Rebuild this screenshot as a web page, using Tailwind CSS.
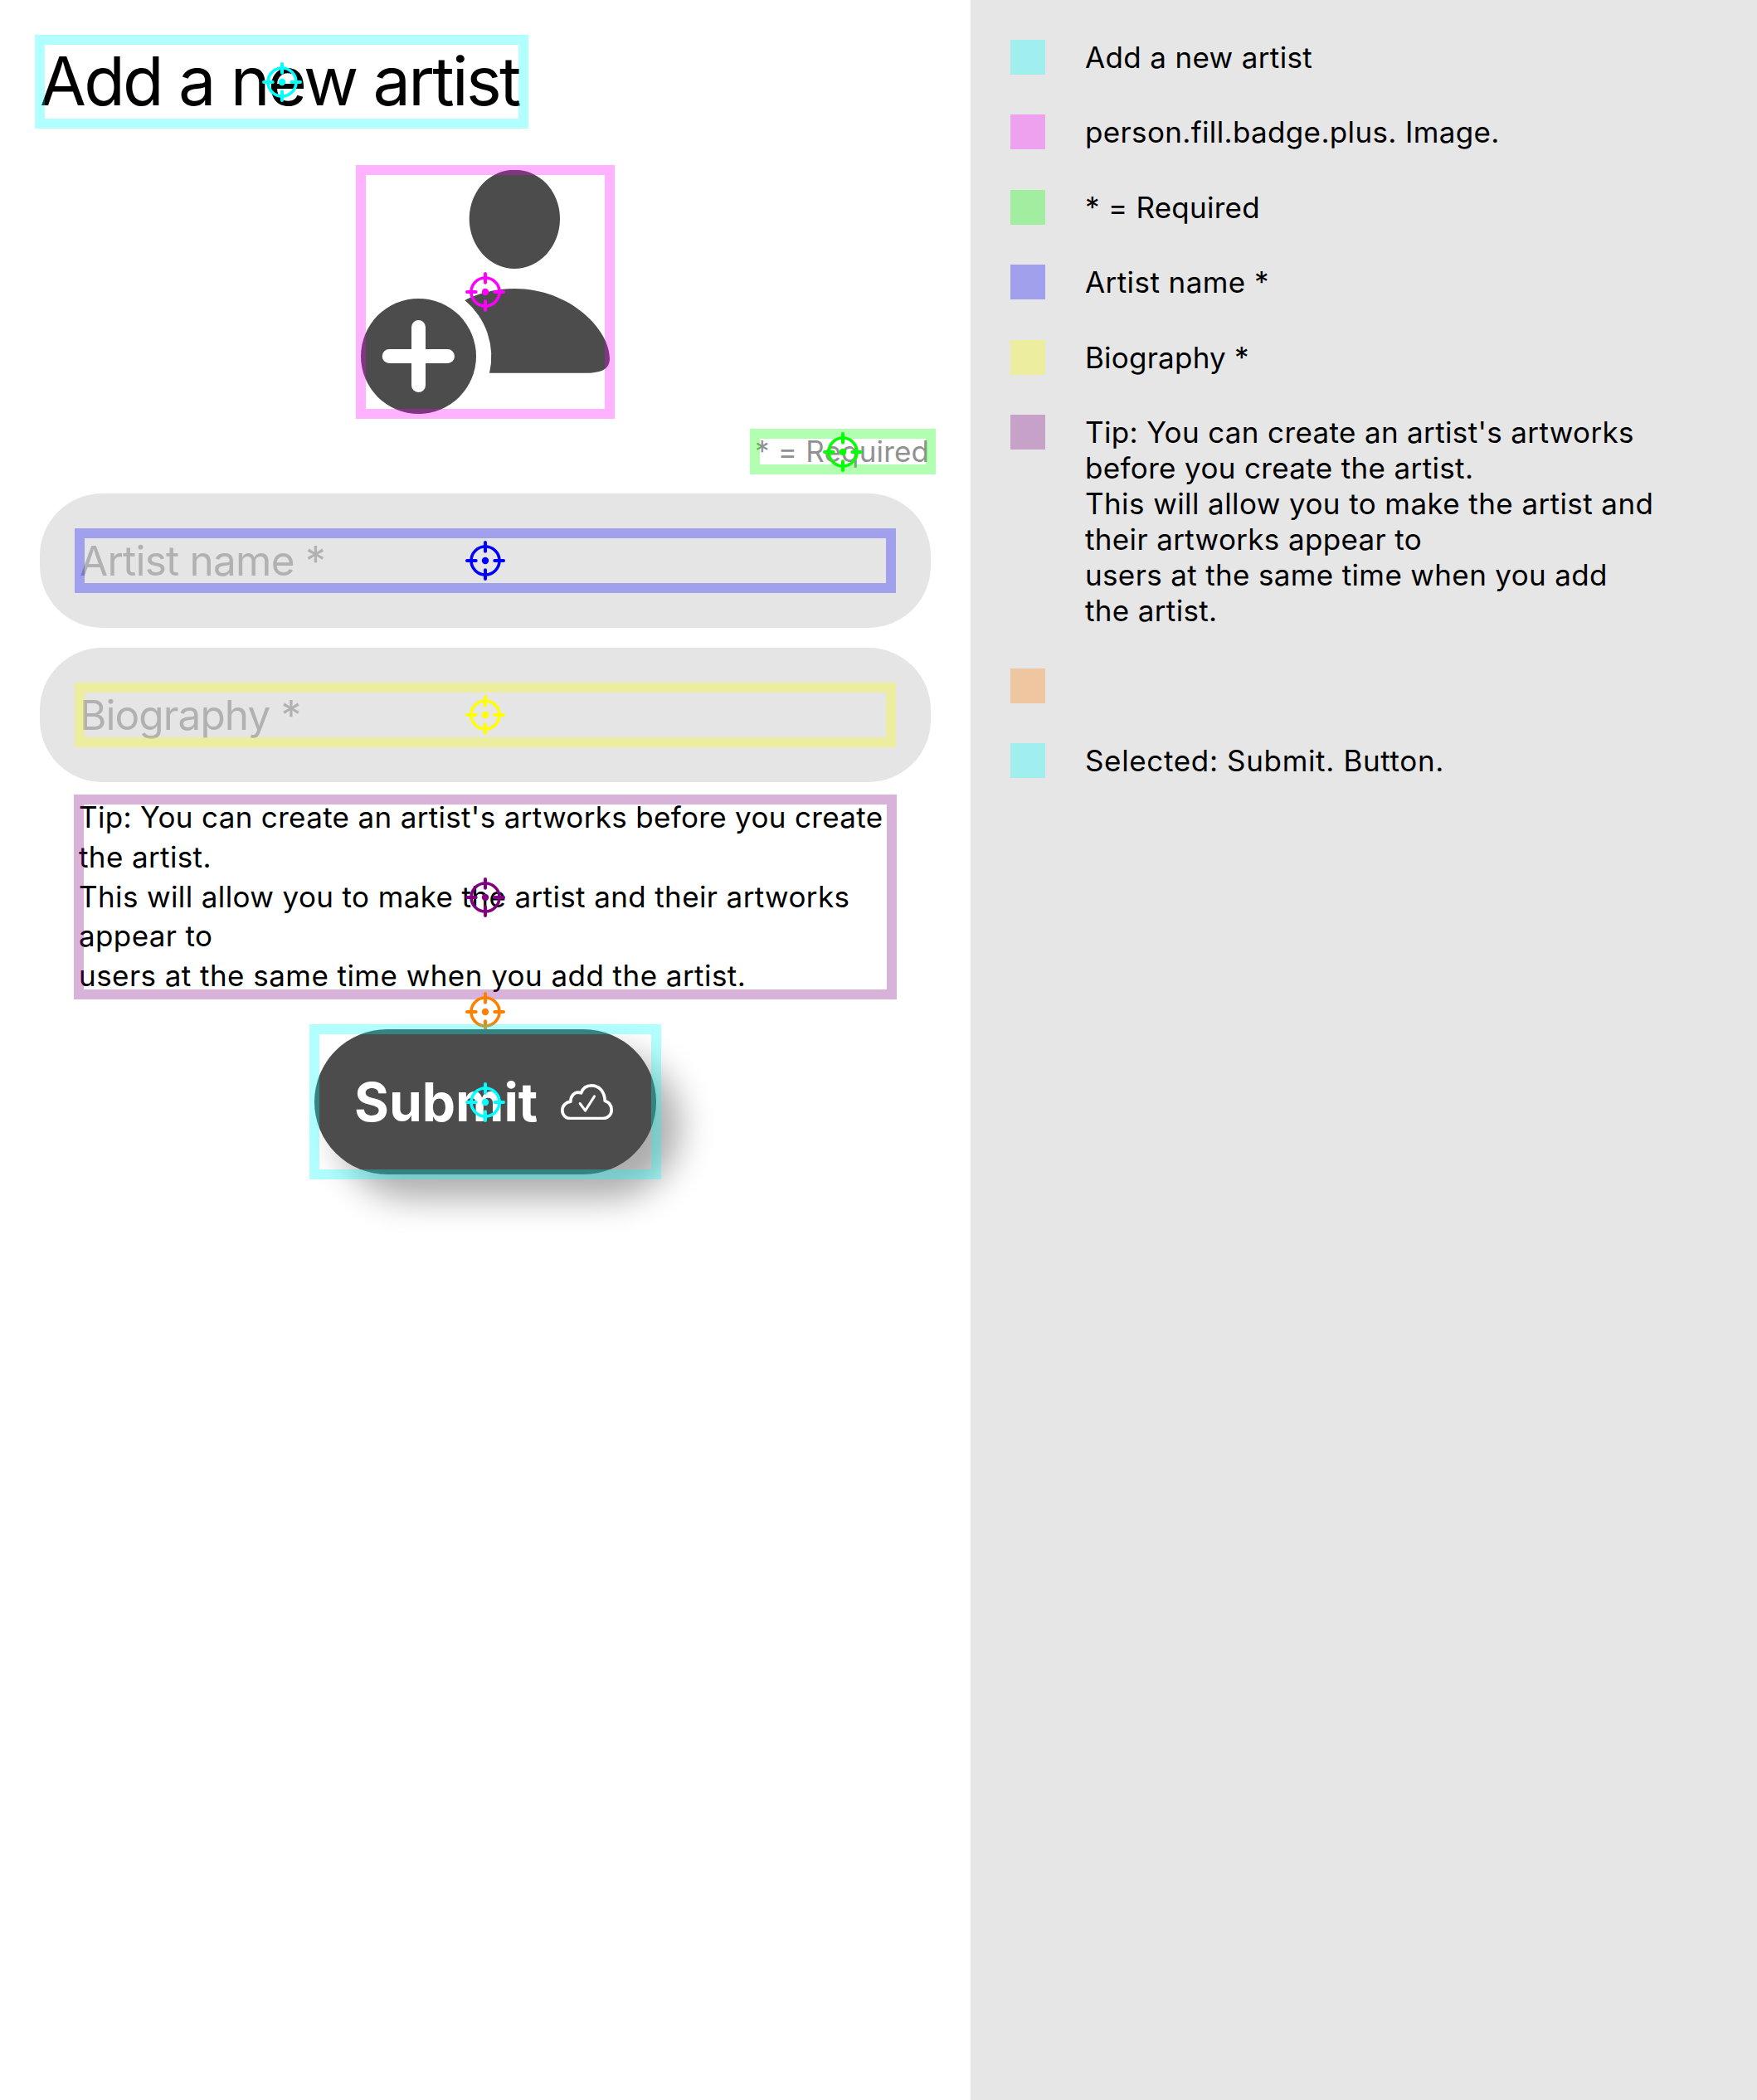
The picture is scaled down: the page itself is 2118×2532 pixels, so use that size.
<!DOCTYPE html>
<html lang="en">
<head>
<meta charset="utf-8">
<title>Add a new artist</title>
<script src="https://cdn.jsdelivr.net/npm/@tailwindcss/browser@4"></script>
</head>
<body class="bg-white text-black font-['Inter',sans-serif]">
<svg class="hidden">
  <symbol id="target" viewBox="0 0 48 48">
    <g fill="none" stroke="currentColor" stroke-linecap="round">
      <circle cx="24" cy="24" r="17" stroke-width="3.6"/>
      <path stroke-width="4" d="M2 24H12.7M35.3 24H46M24 2V12.7M24 35.3V46"/>
    </g>
    <circle cx="24" cy="24" r="4.2" fill="currentColor"/>
  </symbol>
</svg>
<div class="flex w-[2118px] h-[2532px] overflow-hidden">
  <main class="w-[1170px] px-12 pt-12 flex flex-col">
    <h1 class="relative self-start w-[583px] h-[101px] text-[81px] leading-[101px] tracking-[-2.73px] whitespace-nowrap">Add a new artist
      <span class="absolute -inset-1.5 border-12 border-[#00ffff]/30"></span>
      <svg class="absolute left-1/2 top-1/2 size-12 -translate-1/2 text-[#00ffff]"><use href="#target"/></svg>
    </h1>

    <div class="relative self-center mt-14 w-[300px] h-[294px]">
      <svg class="block w-[300px] h-[294px]" viewBox="435 205 300 294" fill="#4c4c4c">
        <path d="M620.3 204.7C650 204.7 675 230 675 264C675 297 650 324 620.3 324C590.6 324 565.7 297 565.7 264C565.7 230 590.6 204.7 620.3 204.7Z"/>
        <path d="M560.3 362C578 353 598 348 620 348C688 348 735 398 735 432C735 444 727 449.700 707 449.700H590A88 88 0 0 0 560.300 362Z"/>
        <circle cx="504.500" cy="429.500" r="69.500"/>
        <path d="M469.200 429.500H539.500M504.500 394.500V464.500" stroke="#fff" stroke-width="17" stroke-linecap="round"/>
      </svg>
      <span class="absolute -inset-1.5 border-12 border-[#ff00ff]/30"></span>
      <svg class="absolute left-1/2 top-1/2 size-12 -translate-1/2 text-[#ff00ff]"><use href="#target"/></svg>
    </div>

    <p class="relative self-end mt-6 w-[212px] h-[43px] text-[35px] leading-[43px] tracking-[0.2px] text-[#919191] whitespace-nowrap">* = Required
      <span class="absolute -inset-1.5 border-12 border-[#00ff00]/30"></span>
      <svg class="absolute left-1/2 top-1/2 size-12 -translate-1/2 text-[#00ff00]"><use href="#target"/></svg>
    </p>

    <div class="mt-[29px] p-12 rounded-[75px] bg-[#e5e5e5]">
      <div class="relative h-[66px] text-[49.5px] leading-[66px] tracking-[-0.77px] text-[#b1b1b1] whitespace-nowrap">Artist name *
        <span class="absolute -inset-1.5 border-12 border-[#0000ff]/30"></span>
        <svg class="absolute left-1/2 top-1/2 size-12 -translate-1/2 text-[#0000ff]"><use href="#target"/></svg>
      </div>
    </div>
    <div class="mt-6 p-12 rounded-[75px] bg-[#e5e5e5]">
      <div class="relative h-[66px] text-[49.5px] leading-[66px] tracking-[-0.9px] text-[#b1b1b1] whitespace-nowrap">Biography *
        <span class="absolute -inset-1.5 border-12 border-[#ffff00]/30"></span>
        <svg class="absolute left-1/2 top-1/2 size-12 -translate-1/2 text-[#ffff00]"><use href="#target"/></svg>
      </div>
    </div>

    <div class="relative self-center mt-[21px] w-[980px] h-[235px] flex flex-col">
      <p class="-mt-0.5 text-[35px] leading-[47.8px] tracking-[0.38px] whitespace-nowrap"><span class="tracking-[0.33px]">Tip: You can create an artist's artworks before you create</span><br>the artist.<br>This will allow you to make the artist and their artworks<br>appear to<br><span class="tracking-[0.45px]">users at the same time when you add the artist.</span></p>
      <span class="absolute -inset-1.5 border-12 border-[#800080]/30"></span>
      <svg class="absolute left-1/2 top-1/2 size-12 -translate-1/2 text-[#800080]"><use href="#target"/></svg>
    </div>

    <div class="relative h-[42px]">
      <svg class="absolute left-1/2 top-1/2 size-12 -translate-1/2 text-[#ff8000]"><use href="#target"/></svg>
    </div>

    <button class="relative self-center w-[412px] h-[175px] pl-12 flex items-center rounded-full bg-[#4c4c4c] shadow-[29px_29px_42px_rgba(0,0,0,0.33)] text-white text-[64px] text-left font-bold whitespace-nowrap"><span class="w-[249px]">Submit</span>
      <svg class="w-[63px] h-[43.5px]" viewBox="47.500 52.500 189 130.500" fill="none" stroke="#fff" stroke-width="11" stroke-linecap="round" stroke-linejoin="round">
        <path d="M82 177C65 177 53 164 53 148C53 131 66 118 83 116C83 97 95 83 110 83C114 83 117 83 121 85C127 68 140 58 158 58C186 58 206 79 207 113C222 118 231 130 231 146C231 163 218 177 200 177Z"/>
        <path stroke-width="9" d="M117 123L136 149L169 97"/>
      </svg>
      <span class="absolute -inset-1.5 border-12 border-[#00ffff]/30"></span>
      <svg class="absolute left-1/2 top-1/2 size-12 -translate-1/2 text-[#00ffff]"><use href="#target"/></svg>
    </button>
  </main>

  <aside class="flex-1 bg-[#e6e6e6] p-12 flex flex-col gap-12 text-[35px] leading-[43px] tracking-[0.35px] whitespace-nowrap">
    <div class="flex gap-12 h-[42.4px]"><span class="size-[42px] bg-[#00ffff]/30"></span><span>Add a new artist</span></div>
    <div class="flex gap-12 h-[42.4px]"><span class="size-[42px] bg-[#ff00ff]/30"></span><span>person.fill.badge.plus. Image.</span></div>
    <div class="flex gap-12 h-[42.4px]"><span class="size-[42px] bg-[#00ff00]/30"></span><span class="tracking-[0.25px]">* = Required</span></div>
    <div class="flex gap-12 h-[42.4px]"><span class="size-[42px] bg-[#0000ff]/30"></span><span class="tracking-[0.43px]">Artist name *</span></div>
    <div class="flex gap-12 h-[42.4px]"><span class="size-[42px] bg-[#ffff00]/30"></span><span class="tracking-[0.22px]">Biography *</span></div>
    <div class="flex gap-12"><span class="size-[42px] bg-[#800080]/30"></span><p>Tip: You can create an artist's artworks<br>before you create the artist.<br><span class="tracking-[0.41px]">This will allow you to make the artist and</span><br>their artworks appear to<br>users at the same time when you add<br>the artist.</p></div>
    <div class="flex gap-12 h-[42.4px]"><span class="size-[42px] bg-[#ff8000]/30"></span></div>
    <div class="flex gap-12 h-[42.4px]"><span class="size-[42px] bg-[#00ffff]/30"></span><span class="tracking-[0.65px]">Selected: Submit. Button.</span></div>
  </aside>
</div>
</body>
</html>
